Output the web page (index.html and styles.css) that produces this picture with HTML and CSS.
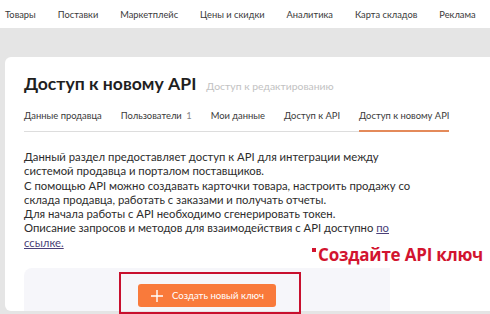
FILE: index.html
```html
<!DOCTYPE html>
<html lang="ru">
<head>
    <meta charset="UTF-8">
    <meta name="viewport" content="width=device-width, initial-scale=1.0">
    <link rel="stylesheet" href="styles.css">
    <title>Доступ к новому API</title>
</head>
<body>
    <nav class="topnav">
        <a href="#">Товары</a>
        <a href="#">Поставки</a>
        <a href="#">Маркетплейс</a>
        <a href="#">Цены и скидки</a>
        <a href="#">Аналитика</a>
        <a href="#">Карта складов</a>
        <a href="#">Реклама</a>
    </nav>

    <main class="page">
        <section class="card">
            <div class="heading">
                <h1>Доступ к новому API</h1>
                <span class="subtitle">Доступ к редактированию</span>
            </div>

            <div class="tabs">
                <a href="#" class="tab">Данные продавца</a>
                <a href="#" class="tab">Пользователи <span class="count">1</span></a>
                <a href="#" class="tab">Мои данные</a>
                <a href="#" class="tab">Доступ к API</a>
                <a href="#" class="tab active">Доступ к новому API</a>
            </div>

            <p class="intro">
                Данный раздел предоставляет доступ к API для интеграции между<br>
                системой продавца и порталом поставщиков.<br>
                С помощью API можно создавать карточки товара, настроить продажу со<br>
                склада продавца, работать с заказами и получать отчеты.<br>
                Для начала работы с API необходимо сгенерировать токен.<br>
                Описание запросов и методов для взаимодействия с API доступно <a href="#">по<br>
                ссылке.</a>
            </p>

            <div class="key-panel">
                <button class="create-btn">
                    <svg width="14" height="14" viewBox="0 0 14 14"><path d="M7 1v12M1 7h12" stroke="#fff" stroke-width="1.4" fill="none"/></svg>
                    Создать новый ключ
                </button>
                <div class="highlight"></div>
            </div>

            <div class="note"><span class="dot"></span>Создайте API ключ</div>
        </section>
    </main>
</body>
</html>
```

FILE: styles.css
```css
body {
  margin: 0;
  width: 490px;
  height: 314px;
  overflow: hidden;
  background-color: #e5e5e5;
  font-family: Lato, 'Noto Sans', Arial, sans-serif;
  color: #333333;
}

a {
  color: inherit;
  text-decoration: none;
}

.topnav {
  display: flex;
  align-items: center;
  gap: 22px;
  height: 28px;
  padding-left: 5px;
  background-color: #ffffff;
  font-size: 9.3px;
  color: #3a3a3a;
  white-space: nowrap;
}

.page {
  padding: 29px 0 0 5px;
}

.card {
  position: relative;
  height: 254px;
  padding: 0 19px;
  background-color: #ffffff;
  border-radius: 6px 0 0 6px;
  white-space: nowrap;
}

.heading {
  display: flex;
  align-items: baseline;
  gap: 10px;
  padding-top: 16px;
}

h1 {
  margin: 0;
  font-size: 17.6px;
  font-weight: 700;
  color: #1f1f1f;
}

.subtitle {
  font-size: 10.4px;
  color: #c2c2c2;
}

.tabs {
  display: flex;
  gap: 19px;
  width: 423px;
  margin-top: 11px;
  border-bottom: 1px solid #dddddd;
  font-size: 9.4px;
}

.tab {
  padding: 5px 0 9px;
  color: #3a3a3a;
}

.tab .count {
  color: #888888;
  margin-left: 2px;
}

.tab.active {
  border-bottom: 2px solid #e48a5a;
  margin-bottom: -1px;
}

.intro {
  margin: 18px 0 0;
  font-size: 11.3px;
  line-height: 14.3px;
  color: #2c2c2c;
}

.intro a {
  color: #4a3f78;
  text-decoration: underline;
}

.key-panel {
  position: relative;
  display: flex;
  justify-content: center;
  width: 366px;
  height: 43px;
  margin-top: 18px;
  padding-top: 16px;
  box-sizing: border-box;
  background-color: #f6f6fa;
  border-radius: 8px 0 0 0;
}

.create-btn {
  display: flex;
  align-items: center;
  justify-content: center;
  gap: 8px;
  width: 138px;
  height: 23px;
  border: none;
  border-radius: 3px;
  background-color: #f97a3b;
  color: #ffffff;
  font-family: inherit;
  font-size: 9.6px;
  padding: 0;
}

.highlight {
  position: absolute;
  left: 95px;
  top: 4px;
  width: 182px;
  height: 42px;
  border: 2px solid #c8102e;
  box-sizing: border-box;
}

.note {
  position: absolute;
  left: 307px;
  top: 186px;
  font-family: 'Open Sans', 'Noto Sans', sans-serif;
  font-size: 17px;
  font-weight: 700;
  color: #d2142f;
  letter-spacing: -0.2px;
}

.dot {
  display: inline-block;
  width: 4px;
  height: 4px;
  margin-right: 2px;
  vertical-align: 9px;
  background-color: #d2142f;
}
```
